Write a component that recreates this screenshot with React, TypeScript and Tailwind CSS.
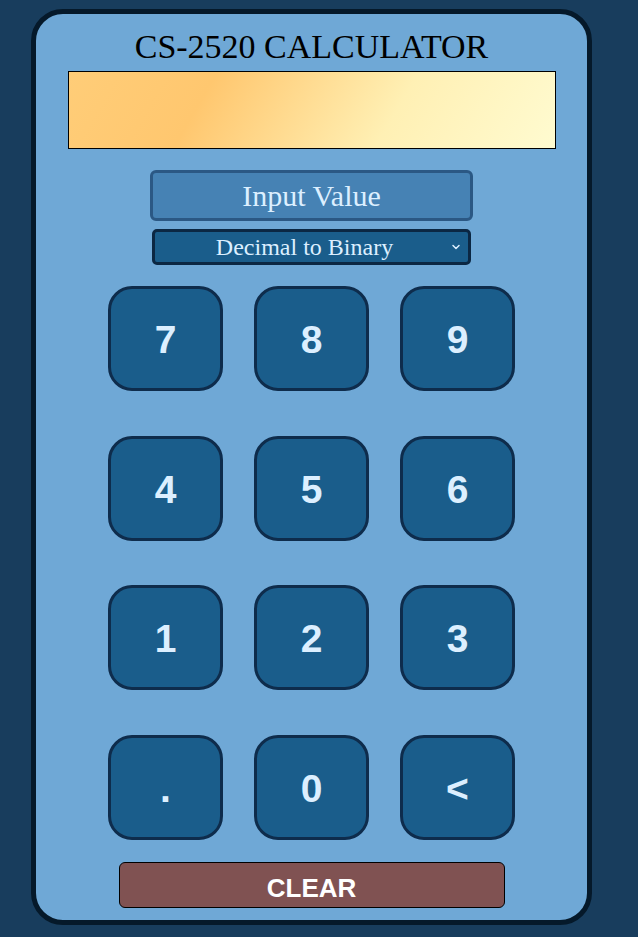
import { ChevronDown } from "lucide-react"

const keys = ["7", "8", "9", "4", "5", "6", "1", "2", "3", ".", "0", "<"]

export default function App() {
    return (
        <div className="min-h-[937px] w-full bg-[#183d5d] pt-[9px] pl-[31px]">
            <div className="w-[561px] rounded-[32px] border-[5px] border-[#05192a] bg-[#6fa8d6] pt-[11px] pb-[12px] flex flex-col items-center">
                <h1 className="h-[46px] leading-[44px] text-[34px] text-black font-['Liberation_Serif',serif]">
                    CS-2520 CALCULATOR
                </h1>

                {/* display */}
                <div className="w-[488px] h-[78px] border border-black bg-[linear-gradient(120deg,#ffcd78_0%,#ffc76f_28%,#fff0b4_66%,#fffbd0_100%)]" />

                <input
                    type="text"
                    placeholder="Input Value"
                    className="mt-[21px] w-[323px] h-[51px] rounded-[6px] border-[3px] border-[#2b5884] bg-[#4682b4] text-center text-[30px] text-[#dcefff] placeholder:text-[#dcefff] font-['Liberation_Serif',serif] outline-none"
                />

                <div className="relative mt-[8px] w-[319px] h-[36px]">
                    <select className="w-full h-full appearance-none rounded-[5px] border-[3px] border-[#0b2743] bg-[#1a5d8b] text-center text-[24px] leading-[28px] text-[#dcefff] font-['Liberation_Serif',serif] pr-[14px] outline-none">
                        <option>Decimal to Binary</option>
                        <option>Binary to Decimal</option>
                    </select>
                    <ChevronDown
                        size={12}
                        strokeWidth={3}
                        className="absolute right-[9px] top-[12px] text-[#dcefff] pointer-events-none"
                    />
                </div>

                <div className="mt-[21px] grid grid-cols-[repeat(3,115px)] gap-x-[31px] gap-y-[44.5px]">
                    {keys.map((k) => (
                        <button
                            key={k}
                            className="h-[105px] rounded-[24px] border-[3px] border-[#0e2c4c] bg-[#1a5d8b] pt-[4px] text-[39px] font-bold text-[#dcefff] font-['Liberation_Sans',Arial,sans-serif]"
                        >
                            {k}
                        </button>
                    ))}
                </div>

                <button className="mt-[22px] w-[386px] h-[46px] rounded-[6px] border border-black bg-[#805252] text-[26px] font-bold text-white font-['Liberation_Sans',Arial,sans-serif] leading-none pt-[6px]">
                    CLEAR
                </button>
            </div>
        </div>
    )
}
